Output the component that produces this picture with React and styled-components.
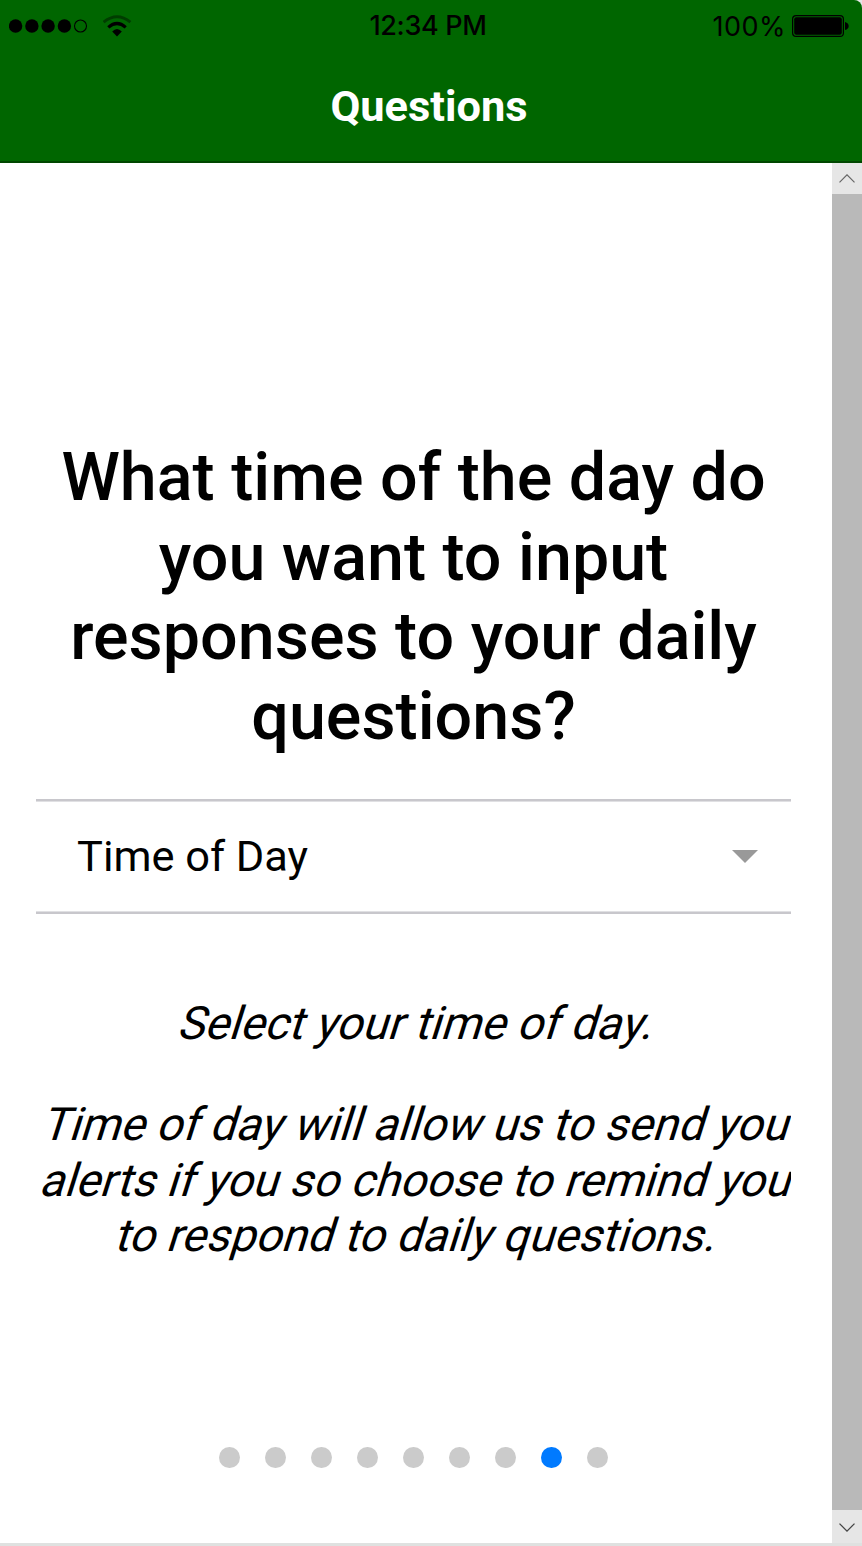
import React from 'react';
import styled, { createGlobalStyle } from 'styled-components';

const Global = createGlobalStyle`
  * { box-sizing: border-box; }
  body { margin: 0; background: #e6e6e6; font-family: Roboto, "Liberation Sans", sans-serif; color: #000; }
`;

const Screen = styled.div`
  width: 862px;
  height: 1546px;
  display: flex;
  flex-direction: column;
  overflow: hidden;
  background: #dfe1e0;
  border-radius: 0 8px 0 0;
`;

const Header = styled.header`
  height: 163px;
  flex: none;
  background: #006600;
  border-bottom: 2px solid #004700;
`;

const StatusBar = styled.div`
  height: 52px;
  display: grid;
  grid-template-columns: 1fr auto 1fr;
  align-items: center;
  padding: 0 13px 0 9px;
  font-family: Inter, "Liberation Sans", sans-serif;
`;

const Signal = styled.div`
  display: flex;
  align-items: center;
  gap: 15px;
`;

const Clock = styled.span`
  padding-right: 2px;
  font-size: 27px;
  font-weight: 500;
  letter-spacing: -0.35px;
  line-height: 50px;
  white-space: nowrap;
`;

const Power = styled.div`
  display: flex;
  justify-content: flex-end;
  align-items: center;
  gap: 6px;
  font-size: 27px;
  letter-spacing: 0.5px;
`;

const Title = styled.h1`
  margin: 0;
  padding-right: 4px;
  font-size: 43.4px;
  font-weight: 700;
  line-height: 110px;
  text-align: center;
  color: #fff;
`;

const Body = styled.div`
  height: 1380px;
  display: flex;
  background: #fff;
`;

const Slide = styled.main`
  flex: 1;
  min-width: 0;
  padding: 274.9px 41px 0 36px;
  display: flex;
  flex-direction: column;
`;

const Question = styled.h2`
  margin: 0 0 42.1px;
  font-size: 66.4px;
  font-weight: 500;
  line-height: 79.75px;
  text-align: center;
`;

const Line = styled.span`
  display: block;
  white-space: nowrap;
`;

const Select = styled.div`
  height: 115px;
  flex: none;
  display: flex;
  align-items: center;
  justify-content: space-between;
  padding: 1px 33px 0 41px;
  border-top: 2px solid #c8c7cc;
  border-bottom: 2px solid #c8c7cc;
  box-shadow: inset 0 1px #e0e0e3, inset 0 -1px #e0e0e3;
  font-size: 43.4px;
`;

const Help = styled.div`
  height: 460px;
  flex: none;
  padding-top: 82px;
  overflow: hidden;
  font-size: 45.9px;
  line-height: 55.3px;
  text-align: center;
`;

const Paragraph = styled.p`
  margin: 0 0 46px;
`;

const Slanted = styled(Line)`
  transform: skewX(-17.5deg);
  transform-origin: 50% 43.5px;
`;

const Pager = styled.div`
  margin-top: 73px;
  display: flex;
  justify-content: center;
  gap: 25.35px;
`;

const Bullet = styled.span`
  width: 20.6px;
  height: 21px;
  border-radius: 50%;
  background: ${({ $active }) => ($active ? '#007aff' : '#cbcbcb')};
`;

const Scrollbar = styled.aside`
  width: 30px;
  display: flex;
  flex-direction: column;
  background: #b9b9b9;
`;

const ScrollButton = styled.div`
  height: ${({ $height }) => $height}px;
  display: flex;
  align-items: center;
  justify-content: center;
  background: #e6e6e6;
`;

const Thumb = styled.div`
  flex: 1;
`;

const SignalDots = () => (
  <svg width="79" height="14" viewBox="0 0 79 14">
    {[6.6, 22.9, 39.1, 55.4].map((x) => <circle key={x} cx={x} cy="7" r="6.7" />)}
    <circle cx="71.5" cy="7" r="6" fill="none" stroke="#000" strokeWidth="1.1" />
  </svg>
);

const Wifi = () => (
  <svg width="29" height="22" viewBox="0 0 29 22">
    <path d="M0.6 7.2 Q14 -3.6 27.4 7.2" fill="none" stroke="#003d00" strokeWidth="3" />
    <path d="M5.3 12.4 Q14 4.6 22.7 12.4" fill="none" stroke="#000" strokeWidth="3.2" />
    <path d="M9.2 16.6 Q14 11.4 18.8 16.6 L14 21.4Z" />
  </svg>
);

const Battery = () => (
  <svg width="57" height="22" viewBox="0 0 57 22">
    <rect x="0.6" y="0.6" width="50.8" height="20.8" rx="3.5" fill="none" stroke="#000" strokeWidth="1.2" />
    <rect x="2.2" y="2.2" width="47.6" height="17.6" rx="2" />
    <path d="M53 7 Q56.7 8 56.7 11 Q56.7 14 53 15Z" />
  </svg>
);

export default function App() {
  return (
    <>
      <Global />
      <Screen>
        <Header>
          <StatusBar>
            <Signal><SignalDots /><Wifi /></Signal>
            <Clock>12:34 PM</Clock>
            <Power>100%<Battery /></Power>
          </StatusBar>
          <Title>Questions</Title>
        </Header>
        <Body>
          <Slide>
            <Question>
              <Line>What time of the day do</Line>
              <Line>you want to input</Line>
              <Line>responses to your daily</Line>
              <Line>questions?</Line>
            </Question>
            <Select>
              Time of Day
              <svg width="26" height="13" viewBox="0 0 26 13"><path d="M0 0H26L13 13Z" fill="#999" /></svg>
            </Select>
            <Help>
              <Paragraph><Slanted>Select your time of day.</Slanted></Paragraph>
              <Paragraph>
                <Slanted>Time of day will allow us to send you</Slanted>
                <Slanted>alerts if you so choose to remind you</Slanted>
                <Slanted>to respond to daily questions.</Slanted>
              </Paragraph>
            </Help>
            <Pager>
              {Array.from({ length: 9 }, (_, i) => <Bullet key={i} $active={i === 7} />)}
            </Pager>
          </Slide>
          <Scrollbar>
            <ScrollButton $height={31}>
              <svg width="16" height="9" viewBox="0 0 16 9"><path d="M.5 8.3L8 .8L15.5 8.3" fill="none" stroke="#666" strokeWidth="1.2" /></svg>
            </ScrollButton>
            <Thumb />
            <ScrollButton $height={33}>
              <svg width="16" height="10" viewBox="0 0 16 10"><path d="M.5 1.6L8 9.1L15.5 1.6" fill="none" stroke="#444" strokeWidth="1.3" /></svg>
            </ScrollButton>
          </Scrollbar>
        </Body>
      </Screen>
    </>
  );
}
